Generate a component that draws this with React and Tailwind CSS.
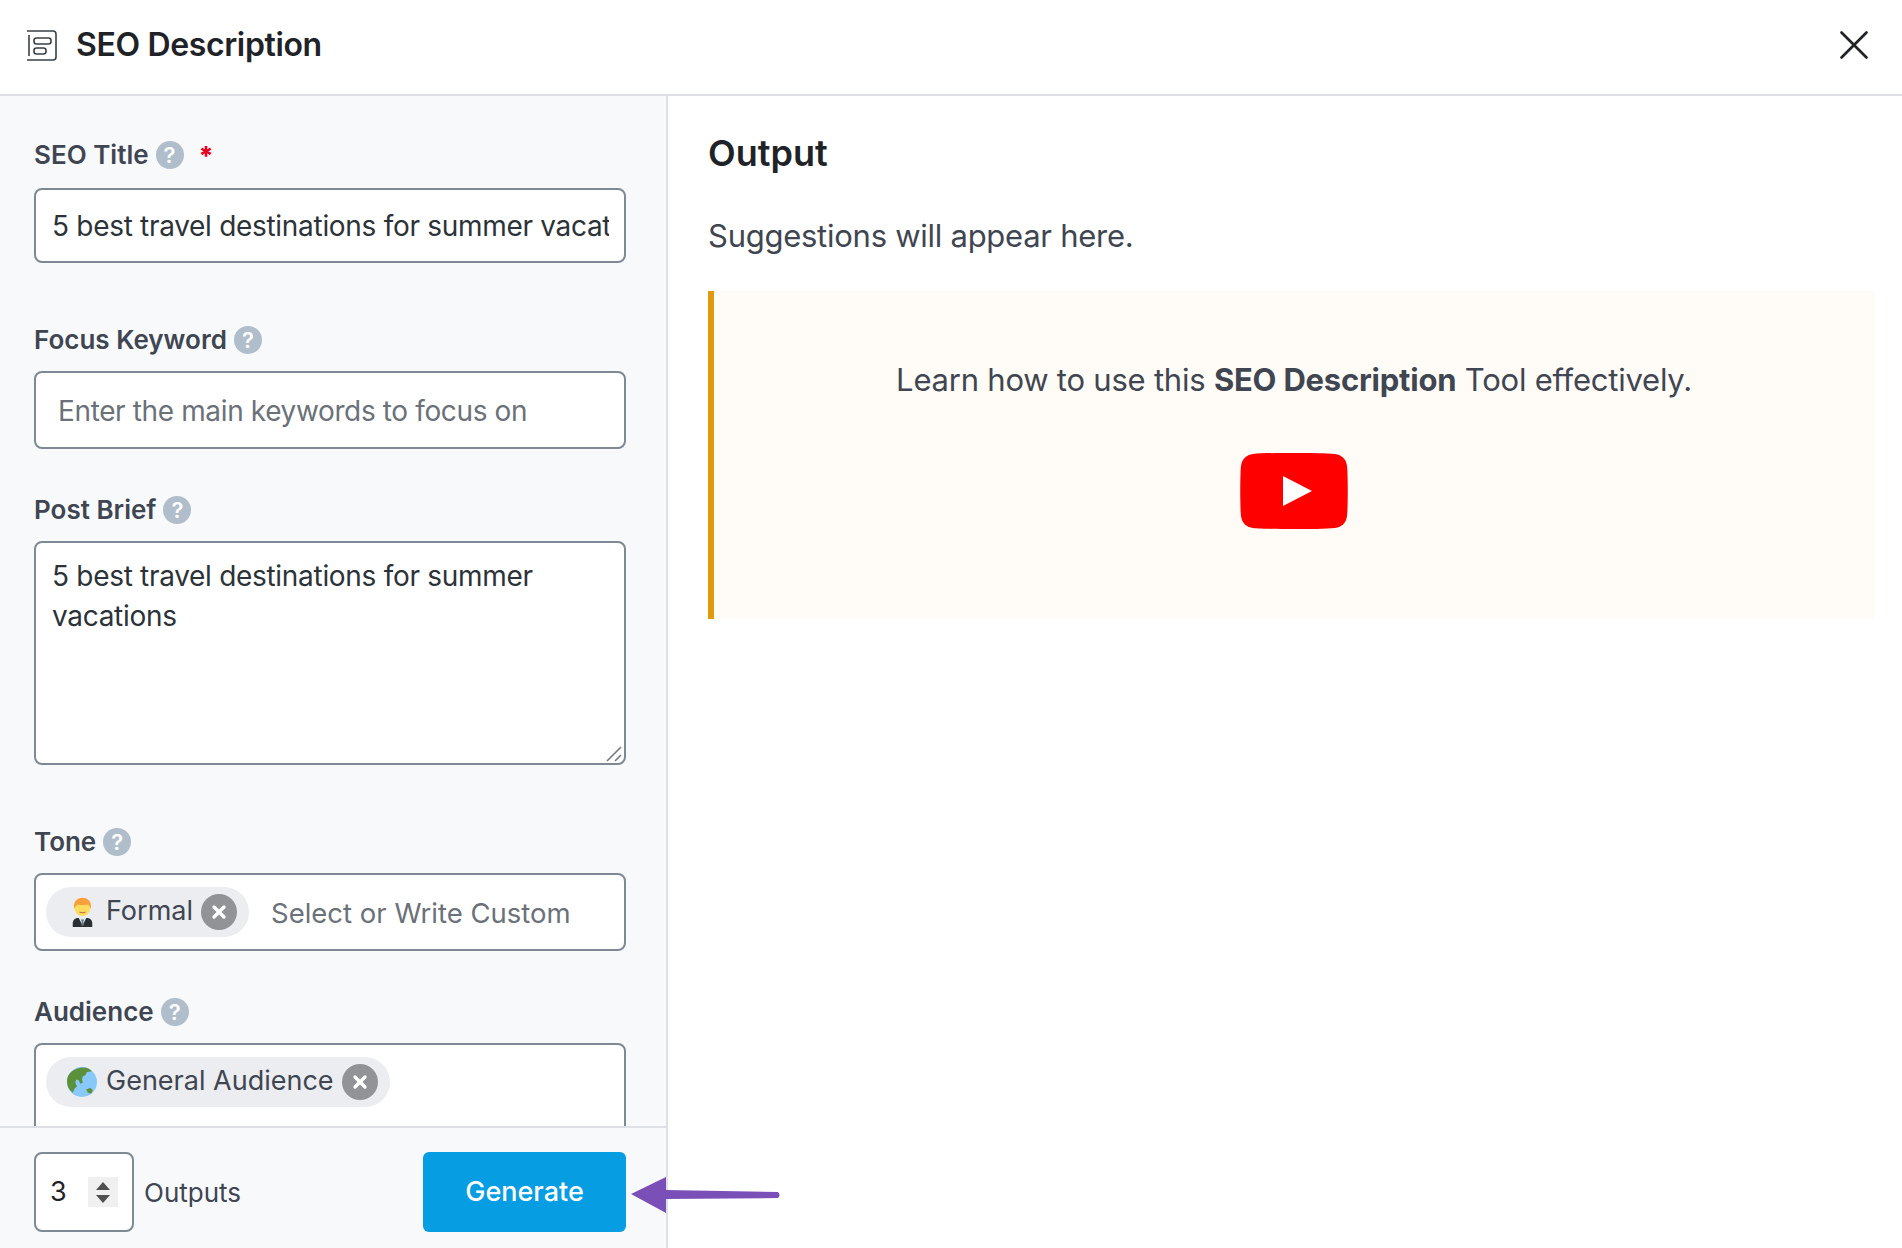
import { X } from 'lucide-react';

function Help() {
  return (
    <span className="inline-flex items-center justify-center w-[28px] h-[28px] rounded-full bg-[#b0bdcb] text-white text-[22px] font-semibold leading-none">?</span>
  );
}

function Label({ text, required, className }) {
  return (
    <div className={`flex items-center gap-[7px] h-[34px] pt-[1px] text-[26px] font-semibold text-[#3f4651] ${className}`}>
      <span>{text}</span>
      <Help />
      {required && <span className="ml-[8px] pt-[2px] text-[26px] font-extrabold text-[#e8001c]">*</span>}
    </div>
  );
}

function Remove() {
  return (
    <span className="flex items-center justify-center w-[36px] h-[36px] rounded-full bg-[#929396]">
      <X className="w-[20px] h-[20px] text-white" strokeWidth={4} />
    </span>
  );
}

function Person() {
  return (
    <svg viewBox="0 0 36 40" className="w-[27px] h-[30px]">
      <path d="M5 40v-5c0-4 3-7 7-7h12c4 0 7 3 7 7v5z" fill="#292f33" />
      <path d="M13 28h10l-5 10z" fill="#e1e8ed" />
      <path d="M16 30h4l-1 3 1 5h-4l1-5z" fill="#66757f" />
      <circle cx="18" cy="15" r="10.5" fill="#ffdc5d" />
      <path d="M7 16C5 5 12 1 18 1s13 4 11 15c-1-3-2-5-4-6-4 1-10 1-13 0-2 1-4 3-5 6z" fill="#f9a03c" />
      <path d="M14 20q4 2 8 0" stroke="#c1694f" strokeWidth="1.5" fill="none" />
    </svg>
  );
}

function Globe() {
  return (
    <svg viewBox="0 0 36 36" className="w-[30px] h-[30px]">
      <circle cx="18" cy="18" r="18" fill="#88c9f9" />
      <path d="M6 5c6-4 14-6 20-3 2 1 3 2 4 3l-6 1-2 4-3 1-1 4 1 4-3 1-2-4-3-1-1 4 2 4-3 3-2 5C2 27 0 22 0 17 0 12 2 8 6 5z" fill="#5c913b" />
      <path d="M23 27l5-2 3 3-2 4-4-1z" fill="#5c913b" />
    </svg>
  );
}

function Chip({ icon, text }) {
  return (
    <div className="flex items-center h-[50px] rounded-full bg-[#ebedf0] pl-[21px] pr-[12px] shrink-0">
      <span className="flex items-center justify-center w-[30px] mr-[9px]">{icon}</span>
      <span className="pb-[2px] text-[27px] text-[#3f4651]">{text}</span>
      <span className="ml-[8px]"><Remove /></span>
    </div>
  );
}

export default function App() {
  return (
    <div className="w-[1902px] h-[1248px] bg-white overflow-hidden flex flex-col text-[#23282d] font-['Inter',sans-serif]">
      {/* Header */}
      <header className="flex items-center justify-between h-[96px] shrink-0 border-b-2 border-[#dde1e6] pl-[27px] pr-[23px] pb-[4px]">
        <div className="flex items-center gap-[19px]">
          <svg viewBox="0 0 30 31" className="w-[30px] h-[31px]" fill="none" stroke="#3a4047" strokeWidth="1.6">
            <path d="M0 1h26a3 3 0 0 1 3 3v23a3 3 0 0 1-3 3H0" />
            <path d="M2 5v21" />
            <rect x="7" y="8" width="17" height="6" rx="2.5" />
            <rect x="7" y="18" width="12" height="6" rx="2.5" />
          </svg>
          <h1 className="text-[32px] tracking-[-0.36px] font-semibold text-[#1f2328]">SEO Description</h1>
        </div>
        <X className="w-[50px] h-[50px] text-[#1f2328]" strokeWidth={1.3} />
      </header>

      <div className="flex flex-1 min-h-0">
        {/* Form */}
        <aside className="relative flex flex-col w-[668px] shrink-0 bg-[#f7f9fb] border-r-2 border-[#dde1e6]">
          <div className="flex-1 min-h-0 overflow-hidden pt-[41px] pl-[34px] pr-[40px]">
            <Label text="SEO Title" required className="mb-[17px]" />
            <input
              readOnly
              value="5 best travel destinations for summer vacations"
              className="block w-full h-[75px] rounded-[8px] border-2 border-[#7e8993] bg-white pt-[1px] pl-[16px] pr-[15px] text-[28px] tracking-[-0.3px] text-[#2c3338] outline-none"
            />

            <Label text="Focus Keyword" className="mt-[59px] mb-[15px]" />
            <input
              readOnly
              placeholder="Enter the main keywords to focus on"
              className="block w-full h-[78px] rounded-[8px] border-2 border-[#7e8993] bg-white pt-[2px] px-[22px] text-[28px] tracking-[-0.37px] placeholder:text-[#6b7178] outline-none"
            />

            <Label text="Post Brief" className="mt-[43px] mb-[15px]" />
            <div className="relative">
              <textarea
                readOnly
                value={'5 best travel destinations for summer vacations'}
                className="block w-full h-[224px] resize-none rounded-[8px] border-2 border-[#7e8993] bg-white pl-[16px] pr-[15px] py-[13px] text-[28px] tracking-[-0.3px] leading-[40px] text-[#2c3338] outline-none"
              />
              <svg viewBox="0 0 16 16" className="absolute right-[4px] bottom-[3px] w-[16px] h-[16px]" stroke="#77797c" strokeWidth="1.6">
                <path d="M1 15L15 1M9 15l6-6" />
              </svg>
            </div>

            <Label text="Tone" className="mt-[59px] mb-[15px]" />
            <div className="flex items-center h-[78px] rounded-[8px] border-2 border-[#7e8993] bg-white pl-[10px]">
              <Chip icon={<Person />} text="Formal" />
              <span className="ml-[22px] pt-[3px] text-[27.5px] text-[#6b7178]">Select or Write Custom</span>
            </div>

            <Label text="Audience" className="mt-[43px] mb-[15px]" />
            <div className="flex items-start h-[120px] rounded-[8px] border-2 border-[#7e8993] bg-white pl-[10px] pt-[12px]">
              <Chip icon={<Globe />} text="General Audience" />
            </div>
          </div>

          {/* Footer */}
          <footer className="flex items-center justify-between h-[122px] shrink-0 border-t-2 border-[#dde1e6] bg-[#f7f9fb] pt-[8px] pl-[34px] pr-[40px]">
            <div className="flex items-center gap-[10px]">
              <div className="flex items-center justify-between w-[100px] h-[80px] rounded-[8px] border-2 border-[#7e8993] bg-white pl-[14px] pr-[14px]">
                <span className="text-[27px] text-[#1f2328]">3</span>
                <span className="flex flex-col items-center justify-center gap-[5px] w-[30px] h-[30px] bg-[#f0f0f0]">
                  <svg viewBox="0 0 14 8" className="w-[14px] h-[8px]"><path d="M7 0l7 8H0z" fill="#505050" /></svg>
                  <svg viewBox="0 0 14 8" className="w-[14px] h-[8px]"><path d="M7 8l7-8H0z" fill="#505050" /></svg>
                </span>
              </div>
              <span className="text-[26px] text-[#3f4651]">Outputs</span>
            </div>
            <button className="w-[203px] h-[80px] rounded-[6px] bg-[#069de3] text-white text-[27px] font-medium">Generate</button>
          </footer>

          {/* Annotation arrow */}
          <svg viewBox="0 0 150 40" className="absolute left-[630px] bottom-[33px] w-[150px] h-[40px] z-10">
            <path d="M1 19L36 2v13l112 2q3 3 0 6L36 24v14z" fill="#7b4fb8" />
          </svg>
        </aside>

        {/* Output */}
        <main className="flex-1 min-w-0 pl-[40px] pr-[28px] pt-[36px]">
          <h2 className="text-[36px] leading-[42px] font-semibold text-[#1f2328]">Output</h2>
          <p className="mt-[42px] text-[31px] tracking-[-0.26px] leading-[40px] text-[#3f4651]">Suggestions will appear here.</p>
          <div className="flex flex-col items-center h-[328px] mt-[35px] border-l-[6px] border-[#e09a0e] bg-[#fffbf6] pt-[68px]">
            <p className="text-[31px] tracking-[-0.22px] leading-[42px] text-[#3f4651]">
              Learn how to use this <strong className="font-bold">SEO Description</strong> Tool effectively.
            </p>
            <svg viewBox="0 0 108 76" className="w-[108px] h-[76px] mt-[52px]">
              <path d="M54 0c14 0 33 0 41 1 7 1 11 5 12 12 1 8 1 42 0 50-1 7-5 11-12 12-8 1-27 1-41 1s-33 0-41-1C6 74 2 70 1 63 0 55 0 21 1 13 2 6 6 2 13 1c8-1 27-1 41-1z" fill="#ff0000" />
              <path d="M43 23l29 15-29 15z" fill="#fff" />
            </svg>
          </div>
        </main>
      </div>
    </div>
  );
}
